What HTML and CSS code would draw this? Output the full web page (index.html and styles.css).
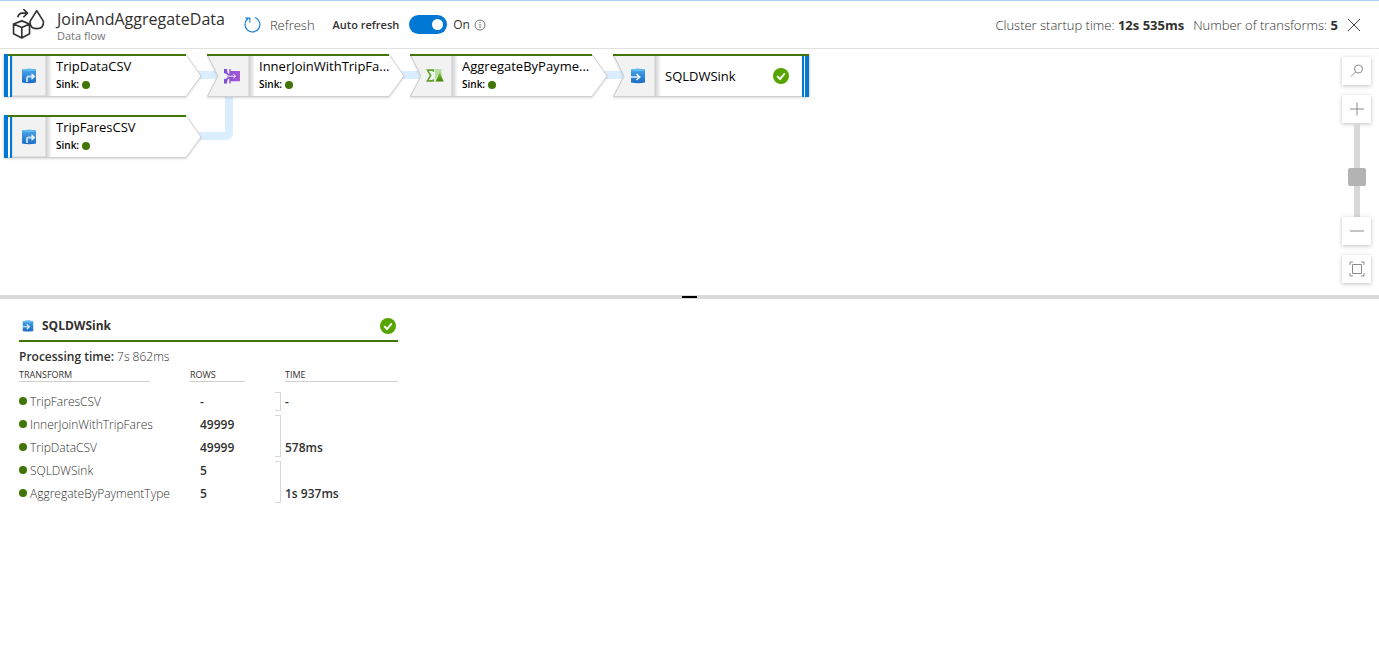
FILE: index.html
```html
<!DOCTYPE html>
<html lang="en">
<head>
    <meta charset="UTF-8">
    <meta name="viewport" content="width=device-width, initial-scale=1.0">
    <title>JoinAndAggregateData</title>
    <link rel="stylesheet" href="styles.css">
</head>
<body>
    <!-- shared shapes -->
    <svg class="defs" aria-hidden="true">
        <defs>
            <linearGradient id="blue" x1="0" y1="0" x2="0" y2="1">
                <stop offset="0" stop-color="#4ba6ea"/>
                <stop offset="1" stop-color="#1b6cc4"/>
            </linearGradient>
            <linearGradient id="purple" x1="0" y1="0" x2="1" y2="0">
                <stop offset="0" stop-color="#7a4fd6"/>
                <stop offset="1" stop-color="#a656d2"/>
            </linearGradient>
            <linearGradient id="green" x1="0" y1="0" x2="0" y2="1">
                <stop offset="0" stop-color="#86c440"/>
                <stop offset="1" stop-color="#3f8500"/>
            </linearGradient>
            <linearGradient id="panelShade" x1="0" y1="0" x2="1" y2="0">
                <stop offset="0" stop-color="#cfcfcf"/>
                <stop offset="1" stop-color="#ffffff"/>
            </linearGradient>
            <symbol id="source" viewBox="0 0 16 16">
                <path d="M1 1.500Q8 0 15 1.500V14.500Q8 16 1 14.500Z" fill="url(#blue)"/>
                <path d="M1 1.500Q8 0 15 1.500V2.500Q8 4 1 2.500Z" fill="#62bcf0"/>
                <path d="M6 14V10Q6 8.500 7.500 8.500H11" fill="none" stroke="#b9d9f5" stroke-width="2"/>
                <path d="M10.500 5L14.500 8.500L10.500 12Z" fill="#e4f2fd"/>
            </symbol>
            <symbol id="sink" viewBox="0 0 16 16">
                <path d="M1 1.500Q8 0 15 1.500V14.500Q8 16 1 14.500Z" fill="url(#blue)"/>
                <path d="M1 1.500Q8 0 15 1.500V2.500Q8 4 1 2.500Z" fill="#62bcf0"/>
                <path d="M1 9H9M6.500 6L9.700 9L6.500 12" fill="none" stroke="#e4f2fd" stroke-width="1.600"/>
            </symbol>
            <symbol id="join" viewBox="0 0 18 18">
                <path d="M0 1H3.500V3Q3.500 6 6 7V1H7.500V3.500H18V15H7.500V17.500H6V11.500Q3.500 12.500 3.500 15.500V17.500H0V12.500L3.500 11V7.500L0 6Z" fill="url(#purple)"/>
                <path d="M0 6.500Q3 6.500 5 9.200Q3 12 0 12M5 9.200H13M10.500 7L13 9.200L10.500 11.500" fill="none" stroke="#f3ecfb" stroke-width="1.100"/>
            </symbol>
            <symbol id="aggregate" viewBox="0 0 16 12">
                <path d="M6.500 2.500V1H1L4 6L1 11H6.500V9.500" fill="none" stroke="#5fa52b" stroke-width="1.500"/>
                <path d="M8 0H14V6H11L8 10Z" fill="#b7dea0"/>
                <path d="M12.500 3L16 11.500H8.500Z" fill="url(#green)"/>
            </symbol>
            <symbol id="check" viewBox="0 0 16 16">
                <circle cx="8" cy="8" r="8" fill="#57a300"/>
                <path d="M4.200 8.200L7 11L11.800 5.400" fill="none" stroke="#fff" stroke-width="1.900"/>
            </symbol>
        </defs>
    </svg>

    <header class="topbar">
        <svg class="flow-logo" viewBox="0 0 32 30" aria-hidden="true">
            <path d="M9.500 11.500L17 14.500V24L9.500 28L1.500 24V14.500ZM1.500 14.500L9.500 18L17 14.500M9.500 18V28"/>
            <path d="M5.500 8Q6.500 4 10 4H14.500M11 0L15 4L11 8"/>
            <path d="M24 1.500L17.500 12Q17 19 24 19T30.500 12Z"/>
        </svg>
        <div class="heading">
            <h1 class="title">JoinAndAggregateData</h1>
            <p class="subtitle">Data flow</p>
        </div>
        <button class="refresh" type="button">
            <svg viewBox="0 0 16 16" aria-hidden="true">
                <path d="M10.500 1.500A7 7 0 1 1 3.500 2.600M1.500 2H5.500V6"/>
            </svg>
            Refresh
        </button>
        <div class="auto">
            <label class="auto-label" for="auto">Auto refresh</label>
            <input class="switch" id="auto" type="checkbox" role="switch" checked>
            <span>On</span>
            <svg class="info" viewBox="0 0 12 12" aria-hidden="true">
                <circle cx="6" cy="6" r="5"/>
                <path d="M6 5V9M6 3V4"/>
            </svg>
        </div>
        <div class="stats">
            <span>Cluster startup time: <b>12s 535ms</b></span>
            <span>Number of transforms: <b>5</b></span>
            <button class="close" type="button" aria-label="Close">
                <svg viewBox="0 0 14 14" aria-hidden="true"><path d="M1 1L13 13M13 1L1 13"/></svg>
            </button>
        </div>
    </header>

    <main>
        <section class="canvas">
            <svg class="links" aria-hidden="true">
                <path d="M198 26H222M401 26H425M604 26H628"/>
                <path d="M198 87H225Q229 87 229 83V46"/>
            </svg>

            <div class="node trip-data">
                <svg class="outline" viewBox="0 0 198 44" aria-hidden="true">
                    <path class="body" d="M0 .5H182L197 22L182 42.500H0Z"/>
                    <path class="panel" d="M8 1H42V42H8Z"/>
                    <path class="shade" d="M42 2H48V42H42Z"/>
                    <path class="bar" d="M0 0H4V43H0ZM6 0H8V43H6Z"/>
                    <path class="status" d="M4 1H182"/>
                </svg>
                <svg class="icon" aria-hidden="true"><use href="#source"/></svg>
                <div class="info-text">
                    <div class="name">TripDataCSV</div>
                    <div class="sink">Sink: <span class="dot"></span></div>
                </div>
            </div>

            <div class="node trip-fares">
                <svg class="outline" viewBox="0 0 198 44" aria-hidden="true">
                    <path class="body" d="M0 .5H182L197 22L182 42.500H0Z"/>
                    <path class="panel" d="M8 1H42V42H8Z"/>
                    <path class="shade" d="M42 2H48V42H42Z"/>
                    <path class="bar" d="M0 0H4V43H0ZM6 0H8V43H6Z"/>
                    <path class="status" d="M4 1H182"/>
                </svg>
                <svg class="icon" aria-hidden="true"><use href="#source"/></svg>
                <div class="info-text">
                    <div class="name">TripFaresCSV</div>
                    <div class="sink">Sink: <span class="dot"></span></div>
                </div>
            </div>

            <div class="node join">
                <svg class="outline" viewBox="0 0 198 44" aria-hidden="true">
                    <path class="body" d="M.5 .5H182L197 22L182 42.500H.5L11 22Z"/>
                    <path class="panel" d="M.5 1H42V42.500H.5L11 22Z"/>
                    <path class="shade" d="M42 2H48V42H42Z"/>
                    <path class="status" d="M0 1H182"/>
                </svg>
                <svg class="icon" aria-hidden="true"><use href="#join"/></svg>
                <div class="info-text">
                    <div class="name">InnerJoinWithTripFa...</div>
                    <div class="sink">Sink: <span class="dot"></span></div>
                </div>
            </div>

            <div class="node aggregate">
                <svg class="outline" viewBox="0 0 198 44" aria-hidden="true">
                    <path class="body" d="M.5 .5H182L197 22L182 42.500H.5L11 22Z"/>
                    <path class="panel" d="M.5 1H42V42.500H.5L11 22Z"/>
                    <path class="shade" d="M42 2H48V42H42Z"/>
                    <path class="status" d="M0 1H182"/>
                </svg>
                <svg class="icon" aria-hidden="true"><use href="#aggregate"/></svg>
                <div class="info-text">
                    <div class="name">AggregateByPayme...</div>
                    <div class="sink">Sink: <span class="dot"></span></div>
                </div>
            </div>

            <div class="node sql-sink">
                <svg class="outline" viewBox="0 0 198 44" aria-hidden="true">
                    <path class="body" d="M.5 .5H196V42.500H.5L11 22Z"/>
                    <path class="panel" d="M.5 1H42V42.500H.5L11 22Z"/>
                    <path class="shade" d="M42 2H48V42H42Z"/>
                    <path class="bar" d="M189 2H191V43H189ZM192 2H196V43H192Z"/>
                    <path class="status" d="M0 1H196"/>
                </svg>
                <svg class="icon" aria-hidden="true"><use href="#sink"/></svg>
                <div class="info-text">
                    <div class="name">SQLDWSink</div>
                </div>
                <svg class="done" role="img" aria-label="Succeeded"><use href="#check"/></svg>
            </div>

            <div class="zoom">
                <button class="tool" type="button" aria-label="Search">
                    <svg viewBox="0 0 16 16"><circle cx="9.500" cy="6" r="4"/><path d="M6.500 9L2 13.500"/></svg>
                </button>
                <div class="zoom-level">
                    <button class="tool" type="button" aria-label="Zoom in">
                        <svg viewBox="0 0 16 16"><path d="M8 1.500V14.500M1 8H15"/></svg>
                    </button>
                    <input class="slider" type="range" min="0" max="100" value="41" aria-label="Zoom level">
                    <button class="tool" type="button" aria-label="Zoom out">
                        <svg viewBox="0 0 16 16"><path d="M1 8H15"/></svg>
                    </button>
                </div>
                <button class="tool" type="button" aria-label="Zoom to fit">
                    <svg viewBox="0 0 16 16"><path d="M3.500 3.500H12.500V12.500H3.500ZM1 4V1H4M12 1H15V4M15 12V15H12M4 15H1V12"/></svg>
                </button>
            </div>
        </section>

        <div class="splitter"><span class="grip"></span></div>

        <section class="details">
            <div class="details-head">
                <svg class="small-icon" aria-hidden="true"><use href="#sink"/></svg>
                <h2 class="details-title">SQLDWSink</h2>
                <svg class="done" role="img" aria-label="Succeeded"><use href="#check"/></svg>
            </div>
            <p class="processing"><b>Processing time:</b> 7s 862ms</p>
            <table class="transforms">
                <colgroup>
                    <col class="col-transform">
                    <col class="col-rows">
                    <col class="col-bracket">
                    <col>
                </colgroup>
                <thead>
                    <tr>
                        <th><span>TRANSFORM</span></th>
                        <th><span>ROWS</span></th>
                        <td></td>
                        <th><span>TIME</span></th>
                    </tr>
                </thead>
                <tbody>
                    <tr>
                        <td><span class="dot"></span>TripFaresCSV</td>
                        <td class="num">-</td>
                        <td class="bracket"></td>
                        <td class="time">-</td>
                    </tr>
                    <tr>
                        <td><span class="dot"></span>InnerJoinWithTripFares</td>
                        <td class="num">49999</td>
                        <td class="bracket" rowspan="2"></td>
                        <td class="time" rowspan="2">578ms</td>
                    </tr>
                    <tr>
                        <td><span class="dot"></span>TripDataCSV</td>
                        <td class="num">49999</td>
                    </tr>
                    <tr>
                        <td><span class="dot"></span>SQLDWSink</td>
                        <td class="num">5</td>
                        <td class="bracket" rowspan="2"></td>
                        <td class="time" rowspan="2">1s 937ms</td>
                    </tr>
                    <tr>
                        <td><span class="dot"></span>AggregateByPaymentType</td>
                        <td class="num">5</td>
                    </tr>
                </tbody>
            </table>
        </section>
    </main>
</body>
</html>
```

FILE: styles.css
```css
* {
    box-sizing: border-box;
}

body {
    margin: 0;
    font-family: "Open Sans", "Noto Sans", sans-serif;
    font-size: 12px;
    line-height: 16px;
    color: #323130;
    background-color: #fff;
}

h1, h2, p {
    margin: 0;
}

b {
    font-weight: 700;
}

button {
    padding: 0;
    border: none;
    background: none;
    font: inherit;
    color: inherit;
    cursor: pointer;
}

svg {
    display: block;
    flex: none;
}

.defs {
    position: absolute;
    width: 0;
    height: 0;
}

/* top bar */
.topbar {
    display: flex;
    align-items: center;
    height: 49px;
    padding: 0 18px 0 12px;
    border-top: 1px solid #a9d3f2;
    border-bottom: 1px solid #e1e1e1;
}

.flow-logo {
    width: 33px;
    height: 31px;
    margin-right: 12px;
    fill: none;
    stroke: #323130;
    stroke-width: 1.6;
    stroke-linejoin: round;
}

.heading {
    padding-top: 3px;
}

.title {
    font-size: 16px;
    line-height: 20px;
    font-weight: 400;
}

.subtitle {
    font-size: 11px;
    line-height: 14px;
    color: #767676;
}

.refresh {
    display: flex;
    align-items: center;
    gap: 9px;
    margin-left: 19px;
    font-size: 13px;
    font-weight: 300;
}

.refresh svg {
    width: 17px;
    height: 17px;
    fill: none;
    stroke: #0078d4;
}

.auto {
    display: flex;
    align-items: center;
    gap: 6px;
    margin-left: 18px;
}

.auto-label {
    margin-right: 4px;
    font-size: 11px;
    font-weight: 600;
}

.switch {
    appearance: none;
    width: 38px;
    height: 19px;
    margin: 0;
    padding: 4px;
    border-radius: 10px;
    background-color: #8a8886;
}

.switch::before {
    content: "";
    display: block;
    width: 11px;
    height: 11px;
    border-radius: 50%;
    background-color: #fff;
}

.switch:checked {
    background-color: #0078d4;
}

.switch:checked::before {
    margin-left: auto;
}

.info {
    width: 12px;
    height: 12px;
    margin-left: -2px;
    fill: none;
    stroke: #767676;
}

.stats {
    display: flex;
    align-items: center;
    gap: 9px;
    margin-left: auto;
    font-size: 13px;
    font-weight: 300;
}

.close svg {
    width: 14px;
    height: 14px;
    fill: none;
    stroke: #444;
}

/* data flow graph */
.canvas {
    position: relative;
    height: 246px;
    overflow: hidden;
}

.links {
    position: absolute;
    top: 0;
    left: 0;
    width: 100%;
    height: 100%;
    fill: none;
    stroke: #daeeff;
    stroke-width: 8;
}

.node {
    position: absolute;
    display: flex;
    align-items: center;
    width: 198px;
    height: 43px;
    padding: 0 22px 0 16px;
    color: #000;
}

.trip-data {
    left: 4px;
    top: 5px;
}

.trip-fares {
    left: 4px;
    top: 66px;
}

.join {
    left: 207px;
    top: 5px;
}

.aggregate {
    left: 410px;
    top: 5px;
}

.sql-sink {
    left: 613px;
    top: 5px;
}

.outline {
    position: absolute;
    inset: 0;
    width: 198px;
    height: 44px;
    overflow: visible;
}

.outline .body {
    fill: #fff;
    stroke: #cfcfcf;
    filter: drop-shadow(0 1px 1px rgba(0, 0, 0, 0.15));
}

.outline .panel {
    fill: #f2f2f2;
    stroke: #cfcfcf;
}

.outline .shade {
    fill: url(#panelShade);
}

.outline .bar {
    fill: #0078d4;
}

.outline .status {
    stroke: #417505;
    stroke-width: 2;
}

.icon {
    position: relative;
    width: 18px;
    height: 16px;
    margin-right: 18px;
}

.aggregate .icon {
    height: 13px;
}

.info-text {
    position: relative;
}

.name {
    font-size: 13px;
    line-height: 18px;
    font-weight: 500;
    white-space: nowrap;
}

.sink {
    display: flex;
    align-items: center;
    gap: 3px;
    font-size: 10px;
    line-height: 19px;
    font-weight: 600;
}

.dot {
    display: inline-block;
    width: 8px;
    height: 8px;
    border-radius: 50%;
    background-color: #417505;
}

.done {
    position: relative;
    width: 16px;
    height: 16px;
    margin-left: auto;
}

/* zoom tools */
.zoom {
    position: absolute;
    top: 8px;
    right: 8px;
    display: flex;
    flex-direction: column;
    gap: 10px;
}

.zoom-level {
    display: flex;
    flex-direction: column;
    align-items: center;
}

.tool {
    display: grid;
    place-items: center;
    width: 29px;
    height: 28px;
    background-color: #fff;
    box-shadow: 0 1px 4px rgba(0, 0, 0, 0.25);
}

.tool svg {
    width: 16px;
    height: 16px;
    fill: none;
    stroke: #8a8a8a;
}

.slider {
    appearance: none;
    writing-mode: vertical-lr;
    direction: rtl;
    width: 18px;
    height: 94px;
    margin: 0;
    background: linear-gradient(#d8d8d8, #d8d8d8) center / 6px 100% no-repeat;
}

.slider::-webkit-slider-thumb {
    appearance: none;
    width: 18px;
    height: 18px;
    border-radius: 2px;
    background-color: #b3b3b3;
}

.splitter {
    display: flex;
    justify-content: center;
    align-items: center;
    height: 4px;
    background-color: #dadada;
}

.grip {
    width: 15px;
    height: 2px;
    background-color: #000;
}

/* run details */
.details {
    width: 100%;
    max-width: 417px;
    padding: 15px 19px;
}

.details-head {
    display: flex;
    align-items: center;
    height: 28px;
    padding: 0 2px 2px 3px;
    border-bottom: 2px solid #417505;
}

.small-icon {
    width: 12px;
    height: 12px;
    margin-right: 8px;
}

.details-title {
    font-size: 12px;
    font-weight: 700;
}

.processing {
    margin-top: 7px;
    font-weight: 300;
}

.processing b {
    font-weight: 600;
}

.transforms {
    width: 100%;
    table-layout: fixed;
    border-collapse: collapse;
}

.transforms td,
.transforms th {
    padding: 0;
    text-align: left;
    font-weight: 300;
}

.transforms th {
    height: 25px;
    vertical-align: top;
    font-size: 9px;
    font-weight: 400;
}

.transforms th span {
    display: block;
    margin-right: 40px;
    padding-top: 3px;
    border-bottom: 1px solid #d0d0d0;
    line-height: 13px;
}

.transforms th:nth-child(2) span {
    margin-right: 30px;
}

.transforms th:last-child span {
    margin-right: 0;
}

.col-transform {
    width: 171px;
}

.col-rows {
    width: 85px;
}

.col-bracket {
    width: 10px;
}

.transforms tbody td {
    height: 23px;
}

.transforms .dot {
    margin-right: 3px;
    vertical-align: 1px;
}

.transforms .num {
    padding-left: 10px;
    font-weight: 600;
}

.transforms .time {
    vertical-align: bottom;
    padding-bottom: 3px;
    font-weight: 600;
}

.bracket {
    position: relative;
}

.bracket::after {
    content: "";
    position: absolute;
    inset: 2px 4px 2px 0;
    border: 1px solid #d8d8d8;
    border-left: none;
}
```
